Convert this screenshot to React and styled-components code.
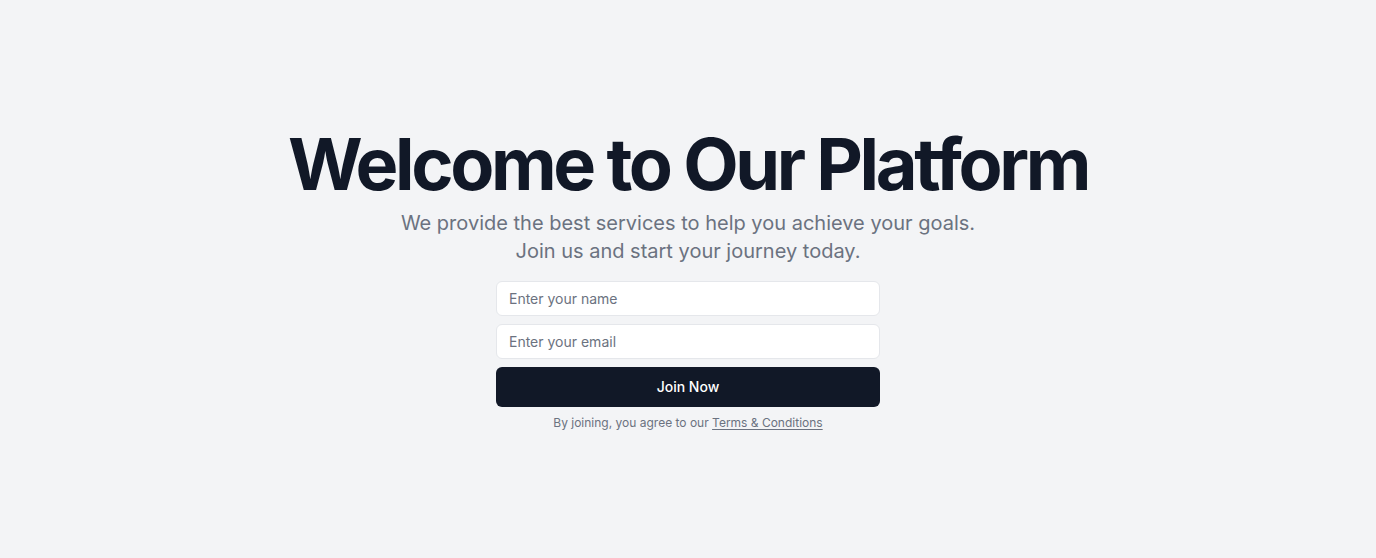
import React from 'react';
import styled, { createGlobalStyle } from 'styled-components';

const GlobalStyle = createGlobalStyle`
    * { box-sizing: border-box; }
    body {
        margin: 0;
        background-color: #f3f4f6;
        font-family: Inter, "Noto Sans", sans-serif;
    }
`;

export default function App() {
    return (
        <>
            <GlobalStyle />
            <Page>
                <Hero>
                    <Title>Welcome to Our Platform</Title>
                    <Subtitle>
                        We provide the best services to help you achieve your goals. Join us and start your journey today.
                    </Subtitle>
                    <Form onSubmit={(e) => e.preventDefault()}>
                        <Input type='text' placeholder='Enter your name' />
                        <Input type='email' placeholder='Enter your email' />
                        <JoinButton type='submit'>Join Now</JoinButton>
                        <Note>
                            By joining, you agree to our <a href='#'>Terms &amp; Conditions</a>
                        </Note>
                    </Form>
                </Hero>
            </Page>
        </>
    );
}


const Page = styled.main`
    min-height: 100vh;
    display: flex;
    align-items: center;
    justify-content: center;
    padding: 0 16px;
`;

const Hero = styled.section`
    display: flex;
    flex-direction: column;
    align-items: center;
    text-align: center;
`;

const Title = styled.h1`
    margin: 0;
    font-size: 72px;
    line-height: 1;
    font-weight: 700;
    letter-spacing: -0.047em;
    color: #111827;
`;

const Subtitle = styled.p`
    margin: 9px 0 0 0;
    max-width: 600px;
    font-size: 20px;
    line-height: 28px;
    color: #6b7280;
`;

const Form = styled.form`
    width: 384px;
    margin-top: 16px;
    display: flex;
    flex-direction: column;
    gap: 8px;
`;

const Input = styled.input`
    height: 35px;
    padding: 0 12px;
    border: 1px solid #e5e7eb;
    border-radius: 6px;
    background-color: #ffffff;
    font-family: inherit;
    font-size: 14px;
    color: #111827;
    outline: none;

    &::placeholder {
        color: #6b7280;
    }
`;

const JoinButton = styled.button`
    height: 40px;
    border: none;
    border-radius: 6px;
    background-color: #111827;
    color: #ffffff;
    font-family: inherit;
    font-size: 14px;
    font-weight: 500;
    cursor: pointer;
`;

const Note = styled.p`
    margin: 0;
    font-size: 12px;
    line-height: 16px;
    color: #6b7280;

    a {
        color: inherit;
        text-decoration: underline;
        text-underline-offset: 2px;
    }
`;
